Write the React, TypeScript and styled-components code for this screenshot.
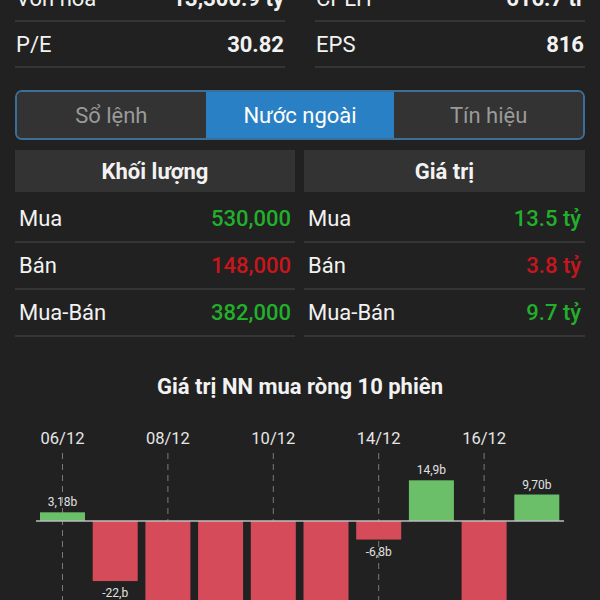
import React from 'react';
import styled, { createGlobalStyle } from 'styled-components';

const GlobalStyle = createGlobalStyle`
  body {
    margin: 0;
    background: #212121;
    font-family: Roboto, "Noto Sans", sans-serif;
    color: #f2f2f2;
    overflow: hidden;
  }
`;

const stats = [
  { label: 'Vốn hoá', value: '13,300.9 tỷ' },
  { label: 'CPLH', value: '616.7 tr' },
  { label: 'P/E', value: '30.82' },
  { label: 'EPS', value: '816' },
];

const tabs = ['Sổ lệnh', 'Nước ngoài', 'Tín hiệu'];

const volume = [
  { label: 'Mua', value: '530,000', tone: 'up' },
  { label: 'Bán', value: '148,000', tone: 'down' },
  { label: 'Mua-Bán', value: '382,000', tone: 'up' },
];

const amount = [
  { label: 'Mua', value: '13.5 tỷ', tone: 'up' },
  { label: 'Bán', value: '3.8 tỷ', tone: 'down' },
  { label: 'Mua-Bán', value: '9.7 tỷ', tone: 'up' },
];

// net foreign value per session, in billions
const sessions = [
  { date: '06/12', value: 3.18, text: '3,18b' },
  { date: '07/12', value: -22, text: '-22,b' },
  { date: '08/12', value: -41, text: '-41,b' },
  { date: '09/12', value: -38, text: '-38,b' },
  { date: '10/12', value: -45, text: '-45,b' },
  { date: '13/12', value: -36, text: '-36,b' },
  { date: '14/12', value: -6.8, text: '-6,8b' },
  { date: '15/12', value: 14.9, text: '14,9b' },
  { date: '16/12', value: -40, text: '-40,b' },
  { date: '17/12', value: 9.7, text: '9,70b' },
];

const Page = styled.div`
  padding: 0 15px;
`;

const StatsGrid = styled.div`
  display: grid;
  grid-template-columns: 1fr 1fr;
  column-gap: 30px;
  margin-top: -24px;
`;

const StatRow = styled.div`
  display: flex;
  justify-content: space-between;
  align-items: center;
  height: 44px;
  padding: 0 1px;
  border-bottom: 2px solid #353535;
  font-size: 22px;
`;

const StatValue = styled.span`
  font-weight: 700;
`;

const TabBar = styled.div`
  display: grid;
  grid-template-columns: 1fr 1fr 1fr;
  margin-top: 22px;
  height: 50px;
  border: 2px solid #3d6e95;
  border-radius: 7px;
  overflow: hidden;
  box-sizing: border-box;
`;

const Tab = styled.div<{ $active?: boolean }>`
  display: flex;
  align-items: center;
  justify-content: center;
  font-size: 22px;
  background: ${(p) => (p.$active ? '#2a80c4' : '#333333')};
  color: ${(p) => (p.$active ? '#ffffff' : '#9a9a9a')};
`;

const Tables = styled.div`
  display: grid;
  grid-template-columns: 280px 1fr;
  column-gap: 9px;
  margin-top: 10px;
`;

const TableHead = styled.div`
  height: 42px;
  display: flex;
  align-items: center;
  justify-content: center;
  background: #333333;
  font-size: 22px;
  font-weight: 700;
`;

const TableRow = styled.div`
  display: flex;
  justify-content: space-between;
  align-items: center;
  height: 45px;
  padding: 0 4px;
  border-bottom: 2px solid #353535;
  font-size: 22px;
  &:nth-child(2) {
    height: 46px;
    padding-top: 3px;
  }
`;

const Value = styled.span<{ $tone: string }>`
  color: ${(p) => (p.$tone === 'up' ? '#22b02b' : '#c8161d')};
  font-weight: 500;
`;

const ChartTitle = styled.div`
  margin-top: 36px;
  line-height: 28px;
  text-align: center;
  font-size: 22px;
  font-weight: 700;
`;

const ChartBox = styled.div`
  margin: 0 -15px;
  height: 201px;
  svg {
    display: block;
  }
`;

const NetChart = () => {
  const base = 120;
  const scale = 2.73;
  const x0 = 40;
  const pitch = 52.7;
  const w = 45;
  return (
    <svg width={600} height={201}>
      {sessions.map((s, i) =>
        i % 2 === 0 ? (
          <g key={s.date}>
            <text x={x0 + i * pitch + w / 2} y={43} fill="#e6e6e6" fontSize={16.5} textAnchor="middle"
              fontFamily="Roboto, sans-serif">
              {s.date}
            </text>
            <line x1={x0 + i * pitch + w / 2} y1={52} x2={x0 + i * pitch + w / 2} y2={210}
              stroke="#7a7a7a" strokeWidth={1} strokeDasharray="6 5" />
          </g>
        ) : null
      )}
      {sessions.map((s, i) => {
        const h = Math.abs(s.value) * scale;
        const up = s.value > 0;
        const x = x0 + i * pitch;
        return (
          <g key={'b' + s.date}>
            <rect x={x} y={up ? base - h : base} width={w} height={h} fill={up ? '#6cbf69' : '#d54b5a'} />
            <text x={x + w / 2} y={up ? base - h - 6 : base + h + 16} fill="#e0e0e0" fontSize={12}
              textAnchor="middle" fontFamily="Roboto, sans-serif">
              {s.text}
            </text>
          </g>
        );
      })}
      <line x1={36} y1={base} x2={564} y2={base} stroke="#bdbdbd" strokeWidth={1.5} />
    </svg>
  );
};

export default function App() {
  return (
    <Page>
      <GlobalStyle />
      <StatsGrid>
        {stats.map((s) => (
          <StatRow key={s.label}>
            <span>{s.label}</span>
            <StatValue>{s.value}</StatValue>
          </StatRow>
        ))}
      </StatsGrid>
      <TabBar>
        {tabs.map((t, i) => (
          <Tab key={t} $active={i === 1}>{t}</Tab>
        ))}
      </TabBar>
      <Tables>
        {[
          { title: 'Khối lượng', rows: volume },
          { title: 'Giá trị', rows: amount },
        ].map((tbl) => (
          <div key={tbl.title}>
            <TableHead>{tbl.title}</TableHead>
            {tbl.rows.map((r) => (
              <TableRow key={r.label}>
                <span>{r.label}</span>
                <Value $tone={r.tone}>{r.value}</Value>
              </TableRow>
            ))}
          </div>
        ))}
      </Tables>
      <ChartTitle>Giá trị NN mua ròng 10 phiên</ChartTitle>
      <ChartBox>
        <NetChart />
      </ChartBox>
    </Page>
  );
}
